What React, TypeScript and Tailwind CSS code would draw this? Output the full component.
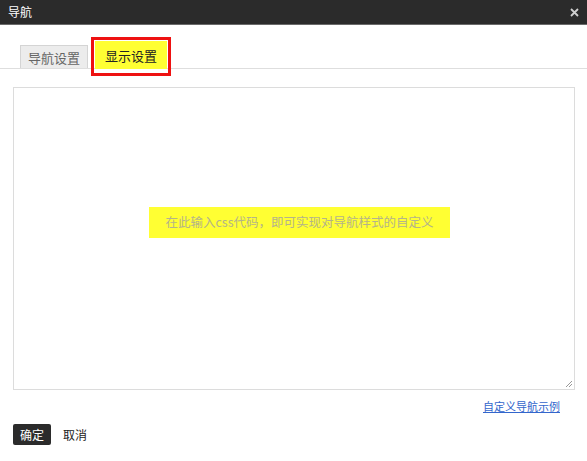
import React from "react";

const font = { fontFamily: '"Noto Sans CJK SC", "Liberation Sans", sans-serif' };

export default function App() {
  return (
    <div
      className="w-[587px] h-[461px] bg-white relative overflow-hidden flex flex-col"
      style={font}
    >
      {/* title bar */}
      <div className="h-[25px] bg-[#2b2b2b] border-b border-[#6a6a6a] flex items-center justify-between pl-[8px] pr-[8px] shrink-0">
        <span className="text-white text-[12px] leading-none">导航</span>
        <svg width="9" height="9" viewBox="0 0 9 9">
          <path d="M1 1L8 8M8 1L1 8" stroke="#cfcfcf" strokeWidth="1.8" />
        </svg>
      </div>

      {/* tabs */}
      <div className="relative h-[44px] border-b border-[#dedede] flex items-end pl-[20px] gap-[7px] shrink-0">
        <div className="h-[23px] w-[68px] bg-[#ececec] border border-b-0 border-[#d4d4d4] flex items-center justify-center text-[13px] text-[#666] leading-none">
          导航设置
        </div>
        <div className="h-[28px] w-[72px] bg-[#ffff33] flex items-center justify-center text-[13px] text-[#222] leading-none mb-[-1px]">
          显示设置
        </div>
        {/* red annotation box */}
        <div className="absolute left-[91px] top-[12px] w-[80px] h-[39px] border-[3px] border-[#ee1111] pointer-events-none" />
      </div>

      {/* textarea */}
      <div className="mt-[18px] ml-[13px] w-[562px] h-[303px] border border-[#dcdcdc] relative shrink-0 flex flex-col">
        <div className="mt-[119px] ml-[135px] w-[301px] h-[31px] bg-[#ffff33] flex items-center justify-center">
          <span className="text-[12.5px] text-[#b4b48a] leading-none">在此输入css代码，即可实现对导航样式的自定义</span>
        </div>
        <svg width="8" height="8" viewBox="0 0 8 8" className="absolute right-[1px] bottom-[1px]">
          <path d="M7 1L1 7M7 4L4 7" stroke="#999" strokeWidth="1" />
        </svg>
      </div>

      {/* link */}
      <div className="flex justify-end pr-[27px] mt-[11px] shrink-0">
        <span className="text-[11px] text-[#3366cc] underline leading-none">自定义导航示例</span>
      </div>

      {/* buttons */}
      <div className="flex items-center ml-[13px] mt-[12px] gap-[12px] shrink-0">
        <div className="w-[38px] h-[21px] bg-[#2b2b2b] rounded-[2px] flex items-center justify-center text-white text-[12px] leading-none">
          确定
        </div>
        <span className="text-[12px] text-[#222] leading-none">取消</span>
      </div>
    </div>
  );
}
